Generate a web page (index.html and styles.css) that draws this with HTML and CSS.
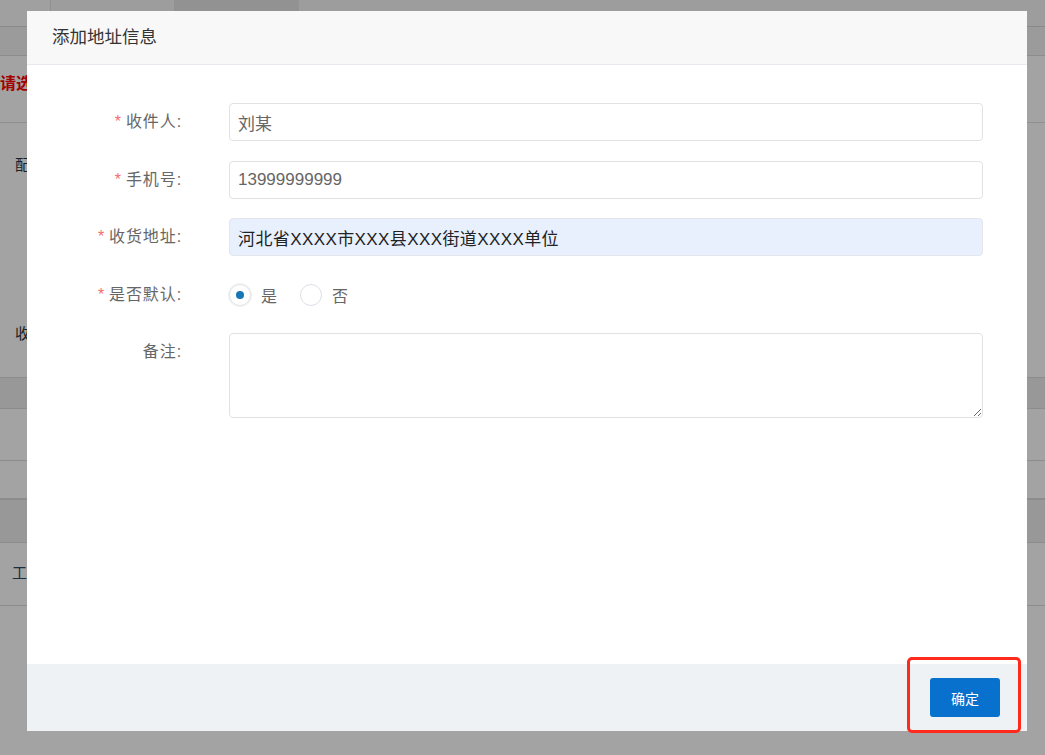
FILE: index.html
```html
<!DOCTYPE html>
<html lang="zh-CN">
<head>
    <meta charset="UTF-8">
    <meta name="viewport" content="width=device-width, initial-scale=1.0">
    <title>添加地址信息</title>
    <link rel="stylesheet" href="styles.css">
</head>
<body>
    <!-- Page behind the dialog -->
    <div class="page">
        <div class="topbar">
            <div class="tab tab-home"></div>
            <div class="tab"></div>
            <div class="tab tab-active"></div>
            <div class="tab tab-rest"></div>
        </div>
        <div class="subbar"></div>
        <div class="notice">请选择配送方式及收货地址</div>
        <div class="info">
            <div class="info-line info-top">配送方式</div>
            <div class="info-line info-bottom">收货地址</div>
        </div>
        <div class="table-head"></div>
        <div class="table-row row-a"></div>
        <div class="table-row row-b"></div>
        <div class="table-head head-b"></div>
        <div class="table-row row-c">工具清单</div>
    </div>

    <div class="mask"></div>

    <!-- Dialog -->
    <div class="dialog">
        <div class="dialog-header">添加地址信息</div>

        <div class="dialog-body">
            <div class="form-row">
                <label class="form-label required">收件人:</label>
                <input class="form-input" type="text" value="刘某">
            </div>
            <div class="form-row">
                <label class="form-label required">手机号:</label>
                <input class="form-input" type="text" value="13999999999">
            </div>
            <div class="form-row">
                <label class="form-label required">收货地址:</label>
                <input class="form-input autofilled" type="text" value="河北省XXXX市XXX县XXX街道XXXX单位">
            </div>
            <div class="form-row">
                <label class="form-label required">是否默认:</label>
                <div class="radio-group">
                    <span class="radio checked"><span class="radio-dot"></span></span>
                    <span class="radio-text">是</span>
                    <span class="radio"></span>
                    <span class="radio-text">否</span>
                </div>
            </div>
            <div class="form-row">
                <label class="form-label">备注:</label>
                <textarea class="form-textarea"></textarea>
            </div>
        </div>

        <div class="dialog-footer">
            <button class="btn-primary">确定</button>
        </div>
    </div>

    <!-- Red highlight drawn over the screenshot -->
    <div class="highlight"></div>
</body>
</html>
```

FILE: styles.css
```css
html, body {
    margin: 0;
    height: 100%;
    overflow: hidden;
}

body {
    font-family: "Liberation Sans", "Noto Sans CJK SC", sans-serif;
    background: #ffffff;
    color: #333;
}

/* ---------- page behind ---------- */

.page {
    height: 755px;
}

.topbar {
    display: flex;
    height: 27px;
    border-bottom: 1px solid #d6d6d6;
    box-sizing: border-box;
}

.tab {
    width: 123px;
    background: #f6f6f6;
}

.tab-home {
    width: 50px;
    background: #fafafa;
    border-right: 1px solid #e0e0e0;
}

.tab-active {
    width: 125px;
    background: #e4e4e6;
}

.tab-rest {
    flex: 1;
}

.subbar {
    height: 29px;
    background: #f3f3f3;
    border-bottom: 1px solid #dcdcdc;
    box-sizing: border-box;
}

.notice {
    height: 67px;
    line-height: 56px;
    font-size: 16px;
    font-weight: bold;
    color: #ff0000;
    border-bottom: 1px solid #e0e0e0;
    box-sizing: border-box;
}

.info {
    height: 254px;
    font-size: 15px;
    padding-left: 15px;
    box-sizing: border-box;
}

.info-top {
    padding-top: 30px;
}

.info-bottom {
    padding-top: 148px;
}

.table-head {
    height: 32px;
    background: #eeeeee;
    border-top: 1px solid #dcdcdc;
    border-bottom: 1px solid #dcdcdc;
    box-sizing: border-box;
}

.head-b {
    height: 44px;
}

.table-row {
    border-bottom: 1px solid #dcdcdc;
    box-sizing: border-box;
}

.row-a { height: 52px; }
.row-b { height: 38px; }

.row-c {
    height: 63px;
    line-height: 60px;
    padding-left: 12px;
    font-size: 15px;
    color: #2c4a66;
}

.mask {
    position: absolute;
    inset: 0;
    background: rgba(0, 0, 0, 0.36);
}

/* ---------- dialog ---------- */

.dialog {
    position: absolute;
    left: 27px;
    top: 11px;
    width: 1000px;
    height: 720px;
    background: #ffffff;
    display: flex;
    flex-direction: column;
}

.dialog-header {
    height: 54px;
    line-height: 52px;
    padding-left: 25px;
    background: #f8f8f8;
    border-bottom: 1px solid #e6e9ee;
    box-sizing: border-box;
    font-size: 17.5px;
    color: #333;
}

.dialog-body {
    flex: 1;
    padding-top: 38px;
}

.form-row {
    display: flex;
    align-items: flex-start;
    margin-bottom: 19.5px;
}

.form-label {
    width: 155px;
    flex-shrink: 0;
    margin-right: 47px;
    text-align: right;
    font-size: 16px;
    letter-spacing: 0.9px;
    line-height: 38px;
    color: #666;
}

.required::before {
    content: "*";
    color: #f56c6c;
    margin-right: 4px;
}

.form-input,
.form-textarea {
    width: 754px;
    box-sizing: border-box;
    border: 1px solid #e2e2e2;
    border-radius: 4px;
    font-family: inherit;
    font-size: 17px;
    color: #666;
    outline: none;
}

.form-input {
    height: 38px;
    padding: 0 8px;
    background: #ffffff;
}

.autofilled {
    background: #e8f0fe;
    border-color: #e3e6ec;
    color: #222;
    letter-spacing: 0.4px;
}

.form-textarea {
    height: 85px;
    padding: 6px 9px;
    resize: vertical;
}

.radio-group {
    display: flex;
    align-items: center;
    height: 38px;
}

.radio {
    width: 22px;
    height: 22px;
    box-sizing: border-box;
    border: 1px solid #dcdfe6;
    border-radius: 50%;
    display: flex;
    justify-content: center;
    align-items: center;
}

.radio.checked {
    border-color: #e0e2e6;
    box-shadow: 0 0 0 1px #f0f1f3;
}

.radio-dot {
    width: 8px;
    height: 8px;
    border-radius: 50%;
    background: #1677b5;
}

.radio-text {
    font-size: 16px;
    color: #666;
    margin-left: 10px;
    margin-right: 23px;
}

.dialog-footer {
    height: 67px;
    background: #eff2f5;
    display: flex;
    justify-content: flex-end;
    align-items: center;
    padding-right: 27px;
}

.btn-primary {
    width: 70px;
    height: 39px;
    border: none;
    border-radius: 3px;
    background: #0871ce;
    color: #ffffff;
    font-family: inherit;
    font-size: 14px;
    cursor: pointer;
}

.highlight {
    position: absolute;
    left: 907px;
    top: 657px;
    width: 114px;
    height: 76px;
    box-sizing: border-box;
    border: 3px solid #ff2a1c;
    border-radius: 5px;
}
```
